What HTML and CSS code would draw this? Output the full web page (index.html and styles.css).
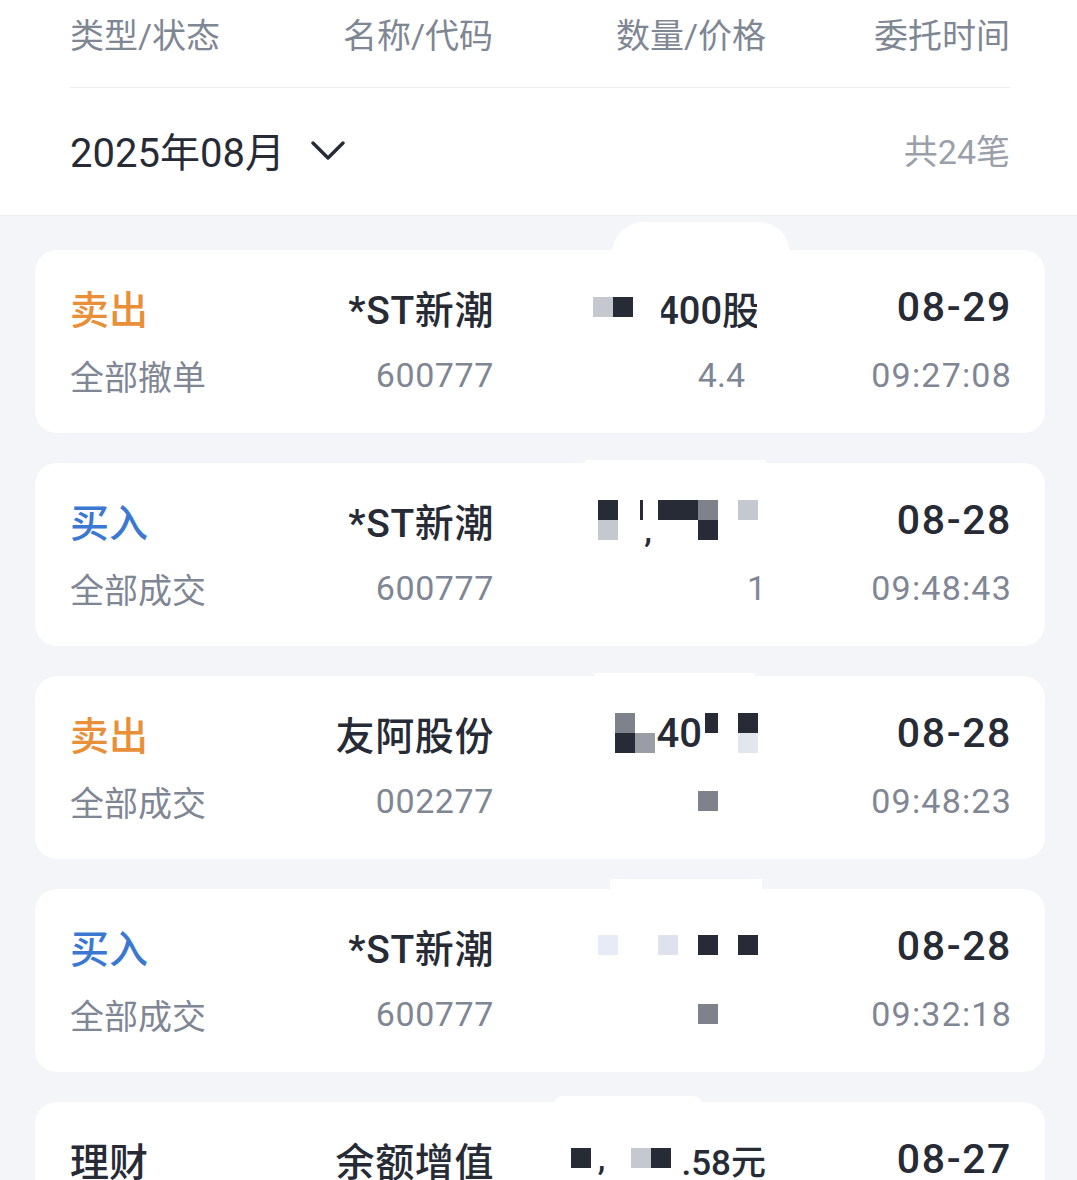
FILE: index.html
```html
<!DOCTYPE html>
<html lang="zh-CN">
<head>
  <meta charset="UTF-8">
  <meta name="viewport" content="width=device-width, initial-scale=1.0">
  <title>委托记录</title>
  <link rel="stylesheet" href="styles.css">
</head>
<body>
  <div class="page">
    <!-- Header -->
    <header class="top">
      <div class="cols head-row">
        <span class="c1">类型/状态</span>
        <span class="c2">名称/代码</span>
        <span class="c3">数量/价格</span>
        <span class="c4">委托时间</span>
      </div>
      <div class="month-row">
        <div class="month">
          2025年08月
          <svg class="chevron" width="34" height="20" viewBox="0 0 34 20">
            <path d="M2 2 L17 17 L32 2" fill="none" stroke="#262b36" stroke-width="3.4" stroke-linecap="round" stroke-linejoin="round"/>
          </svg>
        </div>
        <span class="total">共24笔</span>
      </div>
    </header>

    <!-- Orders -->
    <ul class="orders">
      <li class="order">
        <span class="smudge s1"></span>
        <div class="cols line">
          <span class="c1 kind sell">卖出</span>
          <span class="c2 name">*ST新潮</span>
          <span class="c3 qty">
            <span class="mosaic">
              <i class="lt"></i><i class="dk"></i>
            </span>
            <span class="cut">400股</span>
          </span>
          <span class="c4 date">08-29</span>
        </div>
        <div class="cols line sub">
          <span class="c1">全部撤单</span>
          <span class="c2">600777</span>
          <span class="c3 price">4.4</span>
          <span class="c4">09:27:08</span>
        </div>
      </li>

      <li class="order">
        <span class="smudge s2"></span>
        <div class="cols line">
          <span class="c1 kind buy">买入</span>
          <span class="c2 name">*ST新潮</span>
          <span class="c3 qty">
            <span class="mosaic m8">
              <i class="dk"></i><i></i><i class="bar"></i><i class="dk"></i><i class="dk"></i><i class="gy"></i><i></i><i class="lt"></i>
              <i class="lt"></i><i></i><i class="tx">,</i><i></i><i></i><i class="dk"></i><i></i><i></i>
            </span>
          </span>
          <span class="c4 date">08-28</span>
        </div>
        <div class="cols line sub">
          <span class="c1">全部成交</span>
          <span class="c2">600777</span>
          <span class="c3 price tail">1</span>
          <span class="c4">09:48:43</span>
        </div>
      </li>

      <li class="order">
        <span class="smudge s3"></span>
        <div class="cols line">
          <span class="c1 kind sell">卖出</span>
          <span class="c2 name">友阿股份</span>
          <span class="c3 qty">
            <span class="mosaic">
              <i class="gy"></i><i></i>
              <i class="dk"></i><i class="md"></i>
            </span>
            <span class="num">40</span>
            <span class="mosaic m3">
              <i class="dk"></i><i></i><i class="dk"></i>
              <i></i><i></i><i class="pl"></i>
            </span>
          </span>
          <span class="c4 date">08-28</span>
        </div>
        <div class="cols line sub">
          <span class="c1">全部成交</span>
          <span class="c2">002277</span>
          <span class="c3 price"><i class="blk gy"></i></span>
          <span class="c4">09:48:23</span>
        </div>
      </li>

      <li class="order">
        <span class="smudge s4"></span>
        <div class="cols line">
          <span class="c1 kind buy">买入</span>
          <span class="c2 name">*ST新潮</span>
          <span class="c3 qty">
            <span class="mosaic m8 single">
              <i class="pb"></i><i></i><i></i><i class="pc"></i><i></i><i class="dk"></i><i></i><i class="dk"></i>
            </span>
          </span>
          <span class="c4 date">08-28</span>
        </div>
        <div class="cols line sub">
          <span class="c1">全部成交</span>
          <span class="c2">600777</span>
          <span class="c3 price"><i class="blk gy"></i></span>
          <span class="c4">09:32:18</span>
        </div>
      </li>

      <li class="order">
        <span class="smudge s5"></span>
        <div class="cols line">
          <span class="c1 kind plain">理财</span>
          <span class="c2 name">余额增值</span>
          <span class="c3 qty">
            <span class="mosaic m5 single">
              <i class="dk"></i><i class="tx">,</i><i></i><i class="lt"></i><i class="dk"></i>
            </span>
            <span class="cash">.58元</span>
          </span>
          <span class="c4 date">08-27</span>
        </div>
        <div class="cols line sub">
          <span class="c1">成功</span>
          <span class="c2"></span>
          <span class="c3"></span>
          <span class="c4">10:02:11</span>
        </div>
      </li>
    </ul>
  </div>
</body>
</html>
```

FILE: styles.css
```css
/* General Styles */
body {
  margin: 0;
  padding: 0;
  background: #f4f5f8;
  font-family: Roboto, "Noto Sans CJK SC", sans-serif;
  color: #262b36;
  overflow: hidden;
}

.page {
  width: 1077px;
}

/* Column grid shared by header and cards */
.cols {
  display: grid;
  grid-template-columns: 180px 243px 273px 244px;
  align-items: center;
}

.cols .c2,
.cols .c3,
.cols .c4 {
  text-align: right;
}

/* Header */
.top {
  background: #fff;
  border-bottom: 1px solid #eaecf0;
}

.head-row {
  margin: 0 67px 0 70px;
  padding: 14px 0 29px;
  line-height: 44px;
  font-size: 34px;
  color: #7f8794;
  border-bottom: 1px solid #eceef1;
}

.month-row {
  display: flex;
  justify-content: space-between;
  align-items: center;
  height: 127px;
  padding: 0 67px 0 70px;
}

.month {
  display: flex;
  align-items: center;
  font-size: 40px;
  margin-top: -4px;
}

.chevron {
  margin-left: 26px;
  margin-top: 2px;
}

.total {
  font-size: 34px;
  color: #9aa0aa;
  margin-top: -4px;
}

/* Orders */
.orders {
  list-style: none;
  margin: 0;
  padding: 34px 32px 0 35px;
  display: flex;
  flex-direction: column;
  gap: 30px;
}

.order {
  position: relative;
  background: #fff;
  border-radius: 22px;
  padding: 25px 35px 26px;
  height: 132px;
}

.line {
  position: relative;
  height: 64px;
  font-size: 39px;
  font-weight: 500;
}

.line.sub {
  margin-top: 4px;
  font-size: 34px;
  font-weight: 400;
  color: #7f8694;
}

.line.sub .c2 {
  letter-spacing: 0.6px;
  margin-right: -1px;
}

.line .name {
  letter-spacing: 0.6px;
  margin-right: -1px;
}

.kind.sell {
  color: #e88f38;
}

.kind.buy {
  color: #3a78d2;
}

.kind.plain {
  color: #262b36;
}

.date {
  font-size: 41px;
  letter-spacing: 1.6px;
  margin-right: -2px;
}

.line.sub .c4 {
  letter-spacing: 1.2px;
  margin-right: -2px;
}

/* Masked quantity / price column */
.qty {
  display: flex;
  justify-content: flex-end;
  align-items: center;
}

.mosaic {
  display: inline-grid;
  grid-template-columns: repeat(2, 20px);
  grid-auto-rows: 20px;
}

.mosaic.m3 {
  grid-template-columns: 13px 20px 20px;
  margin-left: 3px;
  margin-right: 8px;
}

.mosaic.m5 {
  grid-template-columns: repeat(5, 20px);
  margin-right: 6px;
}

.mosaic.m8 {
  grid-template-columns: repeat(8, 20px);
  margin-right: 8px;
}

.mosaic.single {
  margin-bottom: 2px;
}

.mosaic i,
.blk {
  display: block;
  width: 20px;
  height: 20px;
  font-style: normal;
}

.mosaic.m3 i:first-child {
  width: 13px;
}

.mosaic .tx {
  font-size: 34px;
  line-height: 20px;
  text-align: center;
}

.mosaic .bar {
  width: 3px;
  margin-left: 2px;
  background: #262b36;
}

.dk { background: #262b36; }
.gy { background: #7d828b; }
.md { background: #9a9ea4; }
.lt { background: #c6c8d0; }
.pl { background: #e4e6ee; }
.pb { background: #e8ebf5; }
.pc { background: #dfe2ec; }

.cut {
  font-size: 38px;
  margin-left: 24px;
  margin-right: 6px;
  clip-path: inset(0 3px 0 4px);
}

.num {
  margin-left: 2px;
  font-size: 40px;
}

.cash {
  font-size: 35px;
  margin-left: 4px;
}

.price {
  padding-right: 21px;
}

.price.tail {
  padding-right: 0;
}

.price .blk {
  margin-left: auto;
  margin-right: 27px;
}

/* white redaction smudges spilling past the card edge */
.smudge {
  position: absolute;
  background: #fff;
  z-index: 0;
}

.smudge.s1 {
  left: 577px;
  top: -28px;
  width: 178px;
  height: 32px;
  border-radius: 40px 40px 0 0;
}

.smudge.s2 {
  left: 550px;
  top: -3px;
  width: 180px;
  height: 6px;
}

.smudge.s3 {
  left: 560px;
  top: -3px;
  width: 160px;
  height: 6px;
}

.smudge.s4 {
  left: 575px;
  top: -10px;
  width: 152px;
  height: 14px;
}

.smudge.s5 {
  left: 518px;
  top: -6px;
  width: 150px;
  height: 10px;
  border-radius: 20px 20px 0 0;
}
```
